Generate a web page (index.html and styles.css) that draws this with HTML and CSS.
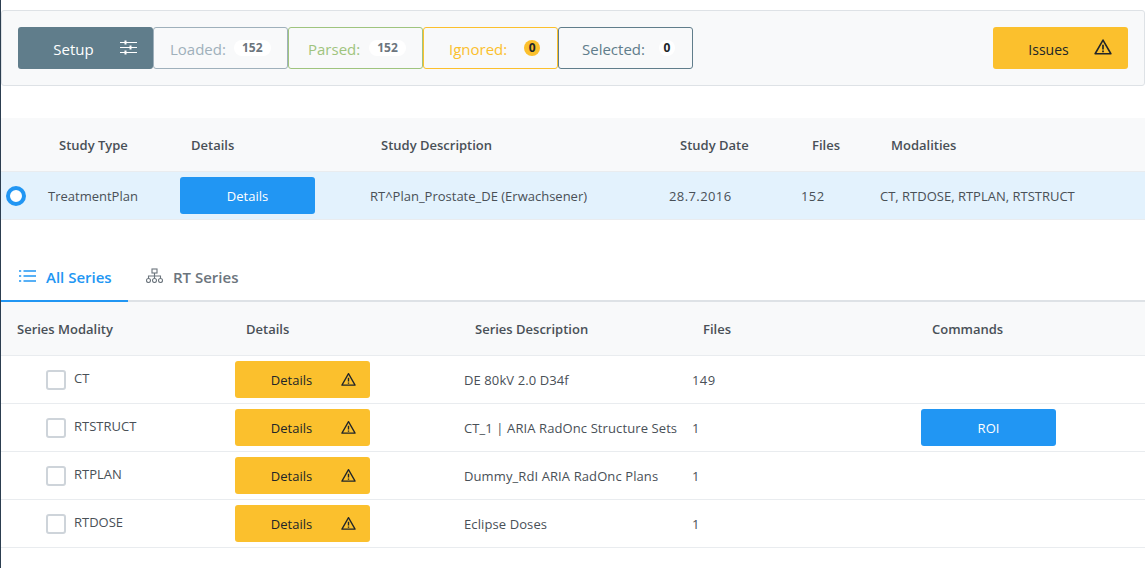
FILE: index.html
```html
<!DOCTYPE html>
<html>
<head>
  <title>Import</title>
  <link rel="stylesheet" href="styles.css">
</head>
<body>

  <svg class="defs" width="0" height="0">
    <symbol id="warn" viewBox="0 0 16 16">
      <path d="M8 1.8 L15 14 H1 Z" fill="none" stroke="currentColor" stroke-width="1.4" stroke-linejoin="round"/>
      <path d="M8 6 V10.2 M8 11.2 V12.6" fill="none" stroke="currentColor" stroke-width="1.5"/>
    </symbol>
  </svg>

  <div class="toolbar">
    <div class="toolbar-left">
      <button class="btn btn-setup">
        <span>Setup</span>
        <svg class="sliders" width="17" height="15" viewBox="0 0 17 15">
          <path d="M0 2.500H17M0 7.500H17M0 12.500H17" stroke="#fff" stroke-width="1.2"/>
          <path d="M5.500 0.500V4.500M10.500 5.500V9.500M5.500 10.500V14.500" stroke="#fff" stroke-width="2"/>
        </svg>
      </button>
      <div class="stat stat-loaded"><span>Loaded:</span><b class="badge">152</b></div>
      <div class="stat stat-parsed"><span>Parsed:</span><b class="badge">152</b></div>
      <div class="stat stat-ignored"><span>Ignored:</span><b class="badge badge-round badge-warn">0</b></div>
      <div class="stat stat-selected"><span>Selected:</span><b class="badge badge-round">0</b></div>
    </div>
    <button class="btn btn-issues">
      <span>Issues</span>
      <svg class="warn-big"><use href="#warn"/></svg>
    </button>
  </div>

  <div class="study-head">
    <div>Study Type</div>
    <div>Details</div>
    <div>Study Description</div>
    <div>Study Date</div>
    <div>Files</div>
    <div>Modalities</div>
  </div>
  <div class="study-row">
    <span class="radio"></span>
    <div>TreatmentPlan</div>
    <div><button class="btn btn-blue">Details</button></div>
    <div>RT^Plan_Prostate_DE (Erwachsener)</div>
    <div class="num">28.7.2016</div>
    <div class="num">152</div>
    <div>CT, RTDOSE, RTPLAN, RTSTRUCT</div>
  </div>

  <div class="tabs">
    <div class="tab tab-active">
      <svg width="17" height="14" viewBox="0 0 17 14">
        <path d="M4.500 2H17M4.500 7H17M4.500 12H17" stroke="currentColor" stroke-width="1.300"/>
        <path d="M0 2H2.200M0 7H2.200M0 12H2.200" stroke="currentColor" stroke-width="1.600"/>
      </svg>
      <span>All Series</span>
    </div>
    <div class="tab">
      <svg width="17" height="15" viewBox="0 0 17 15" fill="none" stroke="currentColor" stroke-width="1.100">
        <rect x="6" y="1" width="5" height="4"/>
        <path d="M8.500 5V8M2.500 10.500V8H14.500V10.500M8.500 8V10.500"/>
        <circle cx="2.500" cy="12.500" r="2"/>
        <circle cx="8.500" cy="12.500" r="2"/>
        <circle cx="14.500" cy="12.500" r="2"/>
      </svg>
      <span>RT Series</span>
    </div>
  </div>

  <div class="series-head">
    <div>Series Modality</div>
    <div>Details</div>
    <div>Series Description</div>
    <div>Files</div>
    <div>Commands</div>
  </div>

  <div class="series-row">
    <div class="mod"><span class="check"></span><span class="mod-name">CT</span></div>
    <div><button class="btn btn-details">Details<svg class="warn-small"><use href="#warn"/></svg></button></div>
    <div class="desc">DE 80kV 2.0 D34f</div>
    <div class="num">149</div>
    <div></div>
  </div>
  <div class="series-row">
    <div class="mod"><span class="check"></span><span class="mod-name">RTSTRUCT</span></div>
    <div><button class="btn btn-details">Details<svg class="warn-small"><use href="#warn"/></svg></button></div>
    <div class="desc">CT_1 | ARIA RadOnc Structure Sets</div>
    <div class="num">1</div>
    <div><button class="btn btn-blue">ROI</button></div>
  </div>
  <div class="series-row">
    <div class="mod"><span class="check"></span><span class="mod-name">RTPLAN</span></div>
    <div><button class="btn btn-details">Details<svg class="warn-small"><use href="#warn"/></svg></button></div>
    <div class="desc">Dummy_RdI ARIA RadOnc Plans</div>
    <div class="num">1</div>
    <div></div>
  </div>
  <div class="series-row">
    <div class="mod"><span class="check"></span><span class="mod-name">RTDOSE</span></div>
    <div><button class="btn btn-details">Details<svg class="warn-small"><use href="#warn"/></svg></button></div>
    <div class="desc">Eclipse Doses</div>
    <div class="num">1</div>
    <div></div>
  </div>

</body>
</html>
```

FILE: styles.css
```css
* {
  box-sizing: border-box;
}
html {
  background: #fff;
}
body {
  margin: 0;
  height: 568px;
  overflow: hidden;
  padding-top: 10px;
  border-left: 1px solid #2c3e50;
  font-family: "Open Sans", sans-serif;
  font-size: 13px;
  color: #495057;
  background: #fff;
}
.defs {
  position: absolute;
}
button {
  font-family: inherit;
}
.num {
  letter-spacing: 0.4px;
}
.desc {
  letter-spacing: 0.1px;
}

.btn {
  border: none;
  border-radius: 3px;
  cursor: pointer;
  display: flex;
  align-items: center;
  justify-content: center;
}

.toolbar {
  height: 76px;
  padding: 0 16px;
  background: #f8f9fa;
  border: 1px solid #dee2e6;
  border-radius: 3px;
  display: flex;
  align-items: center;
  justify-content: space-between;
}
.toolbar-left {
  display: flex;
}
.btn-setup {
  width: 135px;
  height: 42px;
  background: #607d8b;
  color: #fff;
  font-size: 15px;
  gap: 26px;
  padding: 2px 0 0 19px;
}
.sliders {
  margin-top: -4px;
}
.stat {
  width: 135px;
  height: 42px;
  padding-top: 2px;
  border: 1px solid;
  border-radius: 3px;
  font-size: 15px;
  display: flex;
  align-items: center;
}
.badge {
  font-size: 12px;
  font-weight: 700;
  background: #fff;
  color: #6c757d;
  border-radius: 8px;
  min-width: 16px;
  height: 16px;
  line-height: 16px;
  padding: 0 8px;
  margin-top: -3px;
}
.badge-round {
  padding: 0;
  text-align: center;
  color: #212529;
}
.badge-warn {
  background: #fbc02d;
}
.stat-loaded {
  padding-left: 16px;
  gap: 8px;
  color: #9fb0bb;
  border-color: #9fb0bb;
}
.stat-parsed {
  padding-left: 19px;
  gap: 9px;
  color: #9fc47e;
  border-color: #9fc47e;
}
.stat-ignored {
  padding-left: 25px;
  gap: 17px;
  color: #fbc02d;
  border-color: #fbc02d;
}
.stat-selected {
  padding-left: 23px;
  gap: 14px;
  color: #607d8b;
  border-color: #607d8b;
}
.btn-issues {
  width: 135px;
  height: 42px;
  background: #fbc02d;
  color: #212529;
  font-size: 14px;
  gap: 25px;
  padding: 2px 0 0 19px;
}
.warn-big {
  width: 18px;
  height: 18px;
  margin-top: -4px;
}

.study-head {
  margin-top: 32px;
  height: 54px;
  padding-left: 58px;
  background: #f8f9fa;
  border-bottom: 1px solid #e9ecef;
  display: grid;
  grid-template-columns: 132px 190px 299px 132px 79px 1fr;
  align-items: center;
  font-weight: 600;
  color: #495057;
}
.study-row {
  height: 48px;
  padding-left: 47px;
  background: #e3f2fd;
  border-bottom: 1px solid #e9ecef;
  display: grid;
  grid-template-columns: 132px 190px 299px 132px 79px 1fr;
  align-items: center;
  position: relative;
}
.radio {
  position: absolute;
  left: 5px;
  top: 14px;
  width: 20px;
  height: 20px;
  border: 4px solid #2196f3;
  border-radius: 50%;
  background: #fff;
}
.btn-blue {
  width: 135px;
  height: 37px;
  background: #2196f3;
  color: #fff;
  font-size: 13px;
}

.tabs {
  margin-top: 38px;
  height: 44px;
  border-bottom: 2px solid #dee2e6;
  display: flex;
}
.tab {
  height: 44px;
  padding: 0 17px 6px 18px;
  display: flex;
  align-items: center;
  gap: 10px;
  font-size: 15px;
  font-weight: 600;
  white-space: nowrap;
  color: #6c757d;
}
.tab svg {
  margin-top: -3px;
}
.tab-active {
  width: 127px;
  padding: 0 0 4px 18px;
  color: #2196f3;
  border-bottom: 2px solid #2196f3;
}

.series-head {
  height: 54px;
  padding-left: 16px;
  background: #f8f9fa;
  border-bottom: 1px solid #e9ecef;
  display: grid;
  grid-template-columns: 229px 229px 228px 229px 1fr;
  align-items: center;
  font-weight: 600;
}
.series-row {
  height: 48px;
  padding-left: 45px;
  border-bottom: 1px solid #e9ecef;
  display: grid;
  grid-template-columns: 189px 229px 228px 229px 1fr;
  align-items: center;
}
.mod {
  display: flex;
  align-items: center;
  gap: 8px;
}
.mod-name {
  margin-top: -3px;
}
.check {
  width: 20px;
  height: 20px;
  border: 2px solid #ced4da;
  border-radius: 3px;
  background: #fff;
}
.btn-details {
  width: 135px;
  height: 37px;
  padding: 0 22px 0 0;
  background: #fbc02d;
  color: #212529;
  font-size: 13px;
  position: relative;
}
.warn-small {
  position: absolute;
  right: 14px;
  top: 11px;
  width: 15px;
  height: 15px;
}
```
